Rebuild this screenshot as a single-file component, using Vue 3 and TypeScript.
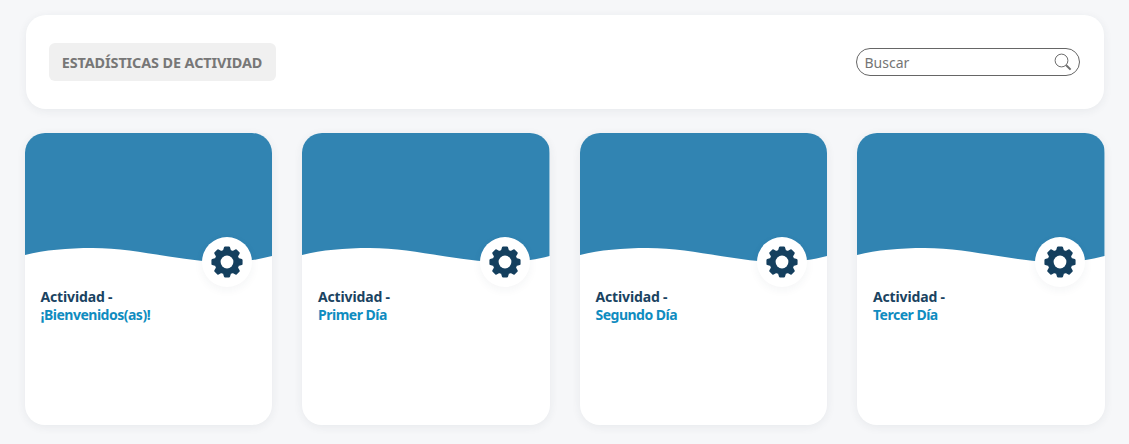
<script setup lang="ts">
const cards = [
  { id: 1, title: '¡Bienvenidos(as)!' },
  { id: 2, title: 'Primer Día' },
  { id: 3, title: 'Segundo Día' },
  { id: 4, title: 'Tercer Día' },
];

// 8 tooth gear around 0,0
const gearPath = (() => {
  const pts: string[] = [];
  const teeth = 8;
  for (let i = 0; i < teeth; i++) {
    const a = (i * Math.PI * 2) / teeth - Math.PI / 2;
    const step = (Math.PI * 2) / teeth;
    const list: [number, number][] = [
      [a - step * 0.34, 11.4],
      [a - step * 0.17, 14.6],
      [a + step * 0.17, 14.6],
      [a + step * 0.34, 11.4],
    ];
    list.forEach(([t, r], j) => {
      const x = (Math.cos(t) * r).toFixed(2);
      const y = (Math.sin(t) * r).toFixed(2);
      pts.push(`${i === 0 && j === 0 ? 'M' : 'L'}${x} ${y}`);
    });
  }
  return pts.join(' ') + ' Z';
})();
</script>

<template>
  <div class="page">
    <header class="topbar">
      <h1 class="badge">ESTADÍSTICAS DE ACTIVIDAD</h1>
      <label class="search">
        <input type="text" placeholder="Buscar" />
        <svg width="18" height="18" viewBox="0 0 18 18" fill="none">
          <circle cx="7.5" cy="7.5" r="6.4" stroke="#6d6d6d" stroke-width="1" />
          <path d="M12.2 12.2 L16.6 16.6" stroke="#6d6d6d" stroke-width="2" />
        </svg>
      </label>
    </header>

    <section class="grid">
      <article v-for="card in cards" :key="card.id" class="card">
        <div class="cover">
          <svg class="wave" viewBox="0 0 248 132" preserveAspectRatio="none">
            <path
              d="M0 0 H248 V123 C232 127 215 130 192 129 C150 127 110 115 68 115 C42 115 20 117 0 122 Z"
              fill="#3184b2"
            />
          </svg>
          <span class="gear-btn">
            <svg width="34" height="34" viewBox="-17 -17 34 34">
              <path :d="gearPath" fill="#143f5e" stroke="#143f5e" stroke-width="2.2" stroke-linejoin="round" />
              <circle r="6.4" fill="#fff" />
            </svg>
          </span>
        </div>
        <div class="body">
          <p class="label">Actividad -</p>
          <p class="name">{{ card.title }}</p>
        </div>
      </article>
    </section>
  </div>
</template>

<style>
body {
  background: #f6f7f9;
}
</style>

<style scoped>
.page {
  height: 444px;
  box-sizing: border-box;
  padding: 15px 24.5px 0;
  font-family: "Noto Sans", "Open Sans", sans-serif;
  overflow: hidden;
}

.topbar {
  height: 94px;
  margin: 0 1px 24px;
  padding: 0 24px 0 23px;
  box-sizing: border-box;
  display: flex;
  align-items: center;
  justify-content: space-between;
  background: #fff;
  border-radius: 20px;
  box-shadow: 0 2px 10px rgba(40, 50, 70, 0.07);
}

.badge {
  margin: 0 0 1px;
  width: 227px;
  height: 38px;
  box-sizing: border-box;
  line-height: 40px;
  text-align: center;
  background: #f0f0f0;
  border-radius: 6px;
  color: #777;
  font-size: 14.4px;
  font-weight: 700;
  letter-spacing: -0.1px;
  white-space: nowrap;
}

.search {
  width: 224px;
  height: 28px;
  box-sizing: border-box;
  padding: 0 7px 0 8px;
  display: flex;
  align-items: center;
  border: 1px solid #666;
  border-radius: 14px;
}

.search input {
  flex: 1;
  min-width: 0;
  border: none;
  outline: none;
  padding: 0;
  background: transparent;
  font-family: inherit;
  font-size: 14px;
  color: #666;
}

.search input::placeholder {
  color: #757575;
  opacity: 1;
}

.grid {
  display: grid;
  grid-template-columns: repeat(4, 1fr);
  gap: 30px;
}

.card {
  height: 292px;
  background: #fff;
  border-radius: 20px;
  overflow: hidden;
  box-shadow: 0 2px 10px rgba(40, 50, 70, 0.07);
}

.cover {
  position: relative;
  height: 132px;
}

.wave {
  display: block;
  width: 100%;
  height: 100%;
}

.gear-btn {
  position: absolute;
  top: 104px;
  right: 20px;
  width: 50px;
  height: 50px;
  display: flex;
  align-items: center;
  justify-content: center;
  background: #fff;
  border-radius: 50%;
  box-shadow: 0 3px 10px rgba(40, 50, 70, 0.05);
}

.body {
  padding: 23px 16px 0;
}

.label,
.name {
  margin: 0;
  font-size: 14px;
  font-weight: 700;
  line-height: 18px;
}

.label {
  color: #1a4361;
  letter-spacing: -0.15px;
}

.name {
  color: #0f8cc0;
  letter-spacing: -0.5px;
}
</style>
